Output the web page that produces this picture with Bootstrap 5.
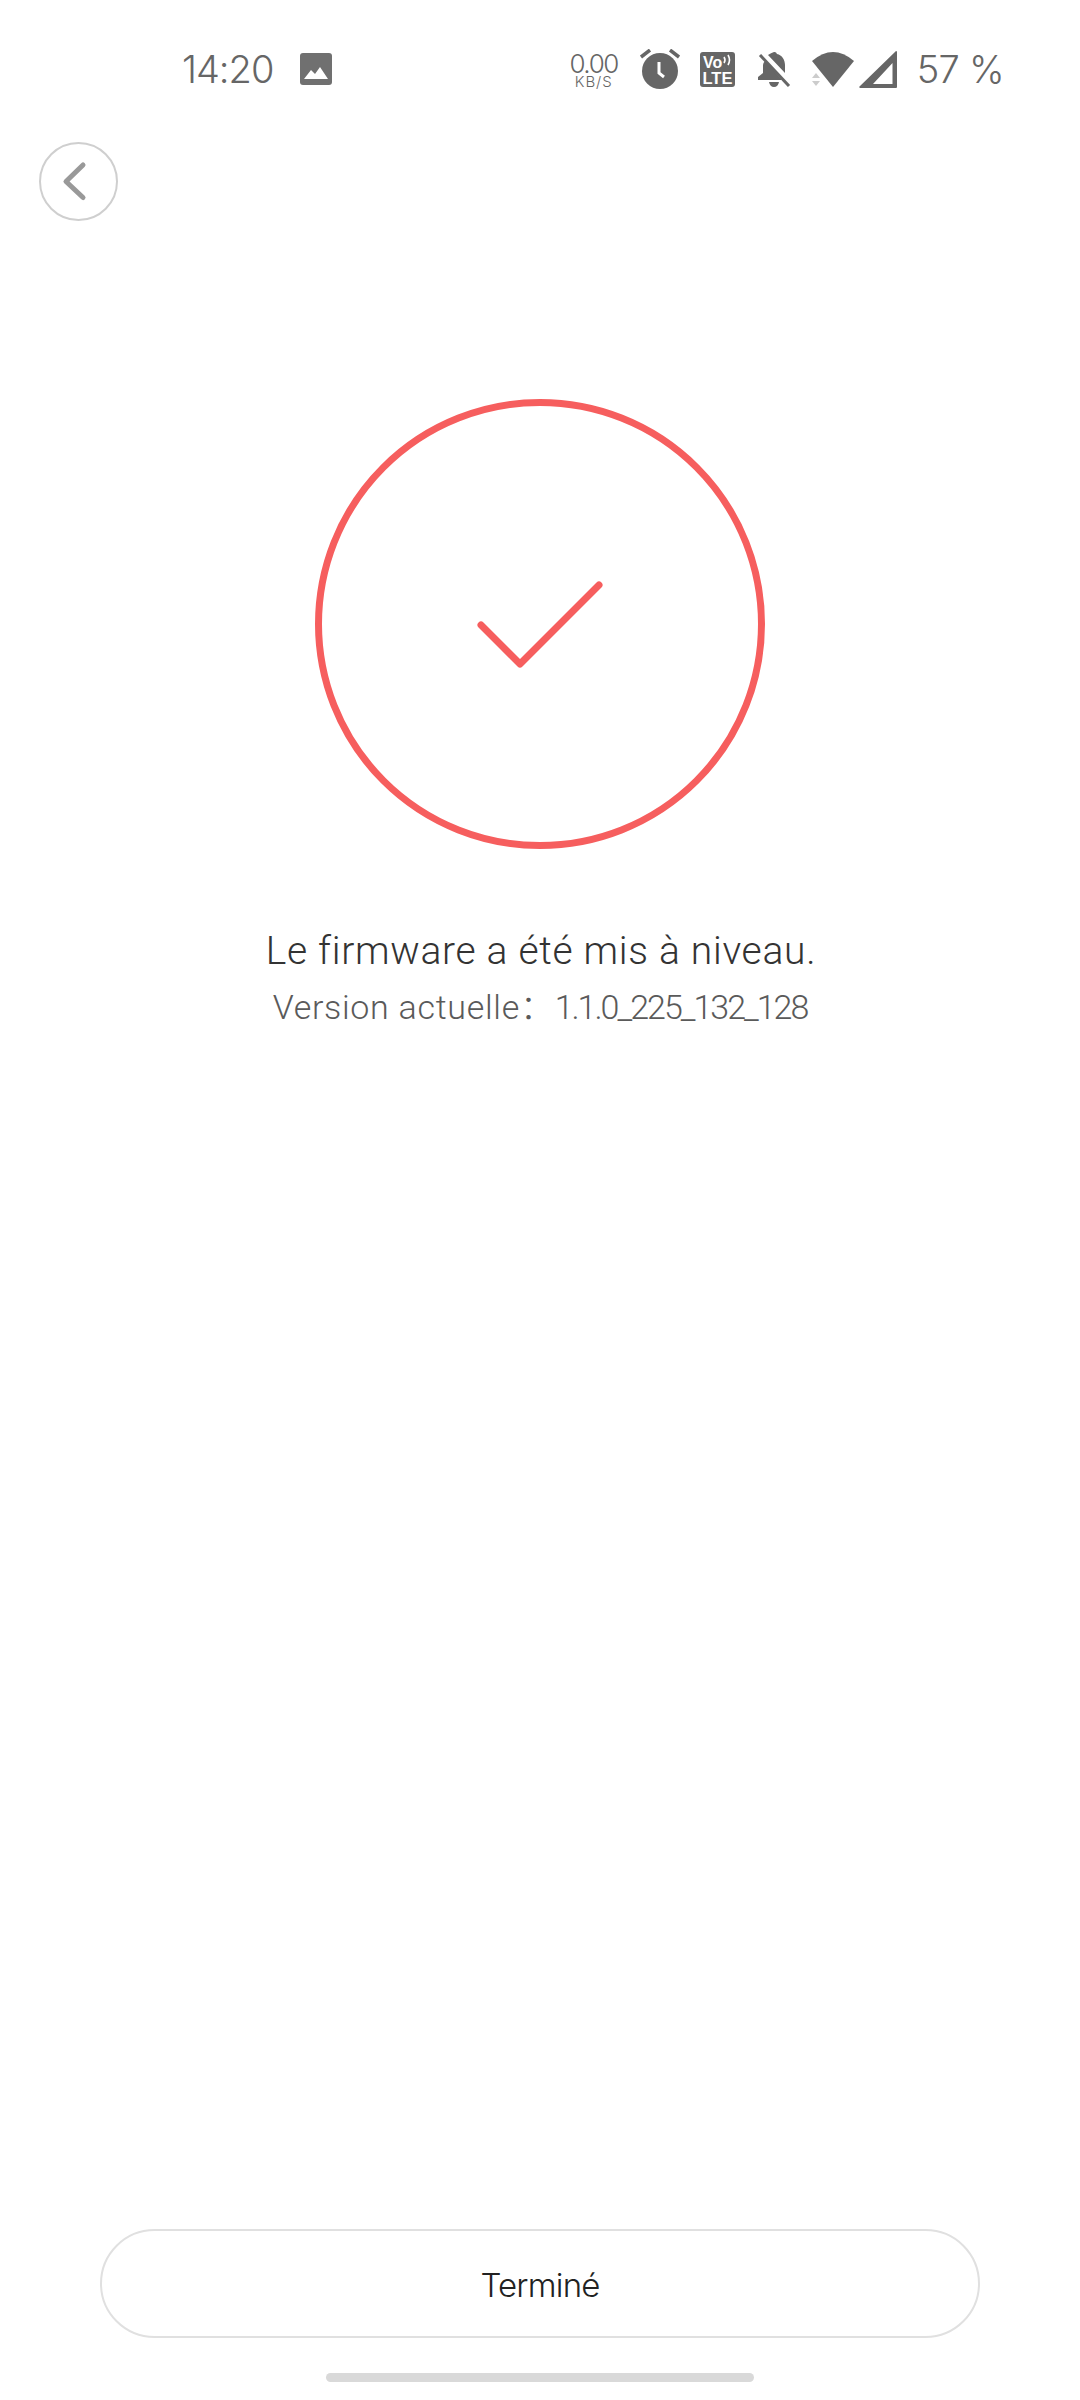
<!DOCTYPE html>
<html lang="fr">
<head>
<meta charset="utf-8">
<title>Firmware</title>
<link href="https://cdn.jsdelivr.net/npm/bootstrap@5.3.0/dist/css/bootstrap.min.css" rel="stylesheet">
<style>
html,body{margin:0;background:#fff}
.screen{width:1080px;height:2400px;font-family:Roboto,"Noto Sans CJK SC",sans-serif}
.statusbar{height:60px;margin-top:39px;padding:0 76px 0 182px;color:#666;font-family:Inter,"Liberation Sans",sans-serif;font-weight:300}
.clock{font-size:38px;line-height:1;letter-spacing:-1px;margin-right:27px}
.netspeed{width:50px;margin-right:21px;line-height:1;text-align:center;margin-top:2px}
.netspeed-num{font-size:26px;letter-spacing:-1.4px;height:22px;line-height:22px}
.netspeed-unit{font-size:15px;letter-spacing:.9px;height:13px;line-height:13px}
.battery{font-size:38px;line-height:1;margin-left:20px;letter-spacing:-.7px}
.ico{display:block;flex:none}
.backbtn{width:79px;height:79px;margin:43px 0 0 39px;background:#fff}
.result-ring{margin-top:178px}
.result-title{font-size:39px;line-height:50px;color:#333;margin-top:77px;font-weight:300;letter-spacing:.7px;padding-left:2px}
.result-sub{font-size:34px;line-height:44px;color:#5a5a5a;margin-top:9px;font-weight:300;letter-spacing:.7px}
.result-ver{letter-spacing:-2px}
.donebtn{width:880px;height:109px;border:2px solid #e0e0e0;border-radius:55px;background:#fff;color:#222;font-family:Inter,"Liberation Sans",sans-serif;font-weight:300;font-size:33px;letter-spacing:-.8px;padding:4px 0 0}
.homebar{width:428px;height:9px;border-radius:5px;background:#d9d9d9;margin:35px 0 18px}
</style>
</head>
<body>
<div class="screen d-flex flex-column">
  <header class="statusbar d-flex align-items-center">
    <span class="clock">14:20</span>
    <svg class="ico" width="32" height="32" viewBox="0 0 32 32"><rect width="32" height="32" rx="3" fill="#707070"/><path d="M4 26l7-9 4 4 5-7 8 12z" fill="#fff"/></svg>
    <div class="ms-auto d-flex align-items-center">
      <div class="netspeed"><div class="netspeed-num">0.00</div><div class="netspeed-unit">KB/S</div></div>
      <svg class="ico" width="40" height="40" viewBox="0 0 40 40"><circle cx="20" cy="22" r="18" fill="#666"/><path d="M1 8L10 1M39 8L30 1" stroke="#666" stroke-width="3.500" fill="none"/><path d="M19 13v11l5 4" stroke="#fff" stroke-width="3" fill="none"/></svg>
      <svg class="ico" style="margin-left:20px" width="35" height="35" viewBox="0 0 35 35"><rect width="35" height="35" rx="3" fill="#666"/><text x="3" y="15.500" font-family="Liberation Sans" font-weight="700" font-size="16" fill="#fff">Vo</text><path d="M24 5q2 3 0 6M28 3q3 5 0 10" stroke="#fff" stroke-width="1.600" fill="none"/><text x="2.500" y="32" font-family="Liberation Sans" font-weight="700" font-size="16.500" fill="#fff">LTE</text></svg>
      <svg class="ico" style="margin-left:23px" width="33" height="35" viewBox="0 0 33 35"><path d="M16 0a3 3 0 0 1 3 2c5 1 8 6 8 11v8l-17-18q3-2 6-3zM7 9l17 19H0v-3l5-4v-8q0-2 2-4zM11 30h10q-1 5-5 5t-5-5z" fill="#666"/><path d="M1 1l31 33" stroke="#fff" stroke-width="2"/><path d="M2 3l29 31" stroke="#666" stroke-width="3"/></svg>
      <svg class="ico" style="margin-left:21px" width="42" height="35" viewBox="0 0 42 35"><path d="M0 9Q21-9 42 9L21 35z" fill="#666"/><path d="M4 21l4 5H0zM0 29h8l-4 5z" fill="#ccc"/></svg>
      <svg class="ico" style="margin-left:5px" width="38" height="37" viewBox="0 0 38 37"><path fill-rule="evenodd" d="M37 0q1 0 1 1v35q0 1-1 1H1L0 36zM33.500 12L14 33h19.500z" fill="#666"/></svg>
      <span class="battery">57 %</span>
    </div>
  </header>

  <button type="button" class="backbtn btn p-0 border-0 rounded-circle" aria-label="Retour">
    <svg class="ico" width="79" height="79" viewBox="0 0 79 79"><circle cx="39.500" cy="39.500" r="38.500" fill="none" stroke="#cfcfcf" stroke-width="2"/><path d="M44 23L27 39.500 44 55.500" fill="none" stroke="#999" stroke-width="5" stroke-linecap="round" stroke-linejoin="round"/></svg>
  </button>

  <main class="d-flex flex-column align-items-center text-center flex-grow-1">
    <svg class="ico result-ring" width="450" height="450" viewBox="0 0 450 450"><circle cx="225" cy="225" r="221.500" fill="none" stroke="#f65e5e" stroke-width="7"/><path d="M166 226L205 265 284 186" fill="none" stroke="#f65e5e" stroke-width="7" stroke-linecap="round" stroke-linejoin="round"/></svg>
    <div class="result-title">Le firmware a été mis à niveau.</div>
    <div class="result-sub">Version actuelle：<span class="result-ver">1.1.0_225_132_128</span></div>
  </main>

  <footer class="d-flex flex-column align-items-center">
    <button type="button" class="donebtn btn">Terminé</button>
    <div class="homebar"></div>
  </footer>
</div>
<script src="https://cdn.jsdelivr.net/npm/bootstrap@5.3.0/dist/js/bootstrap.bundle.min.js"></script>
</body>
</html>
